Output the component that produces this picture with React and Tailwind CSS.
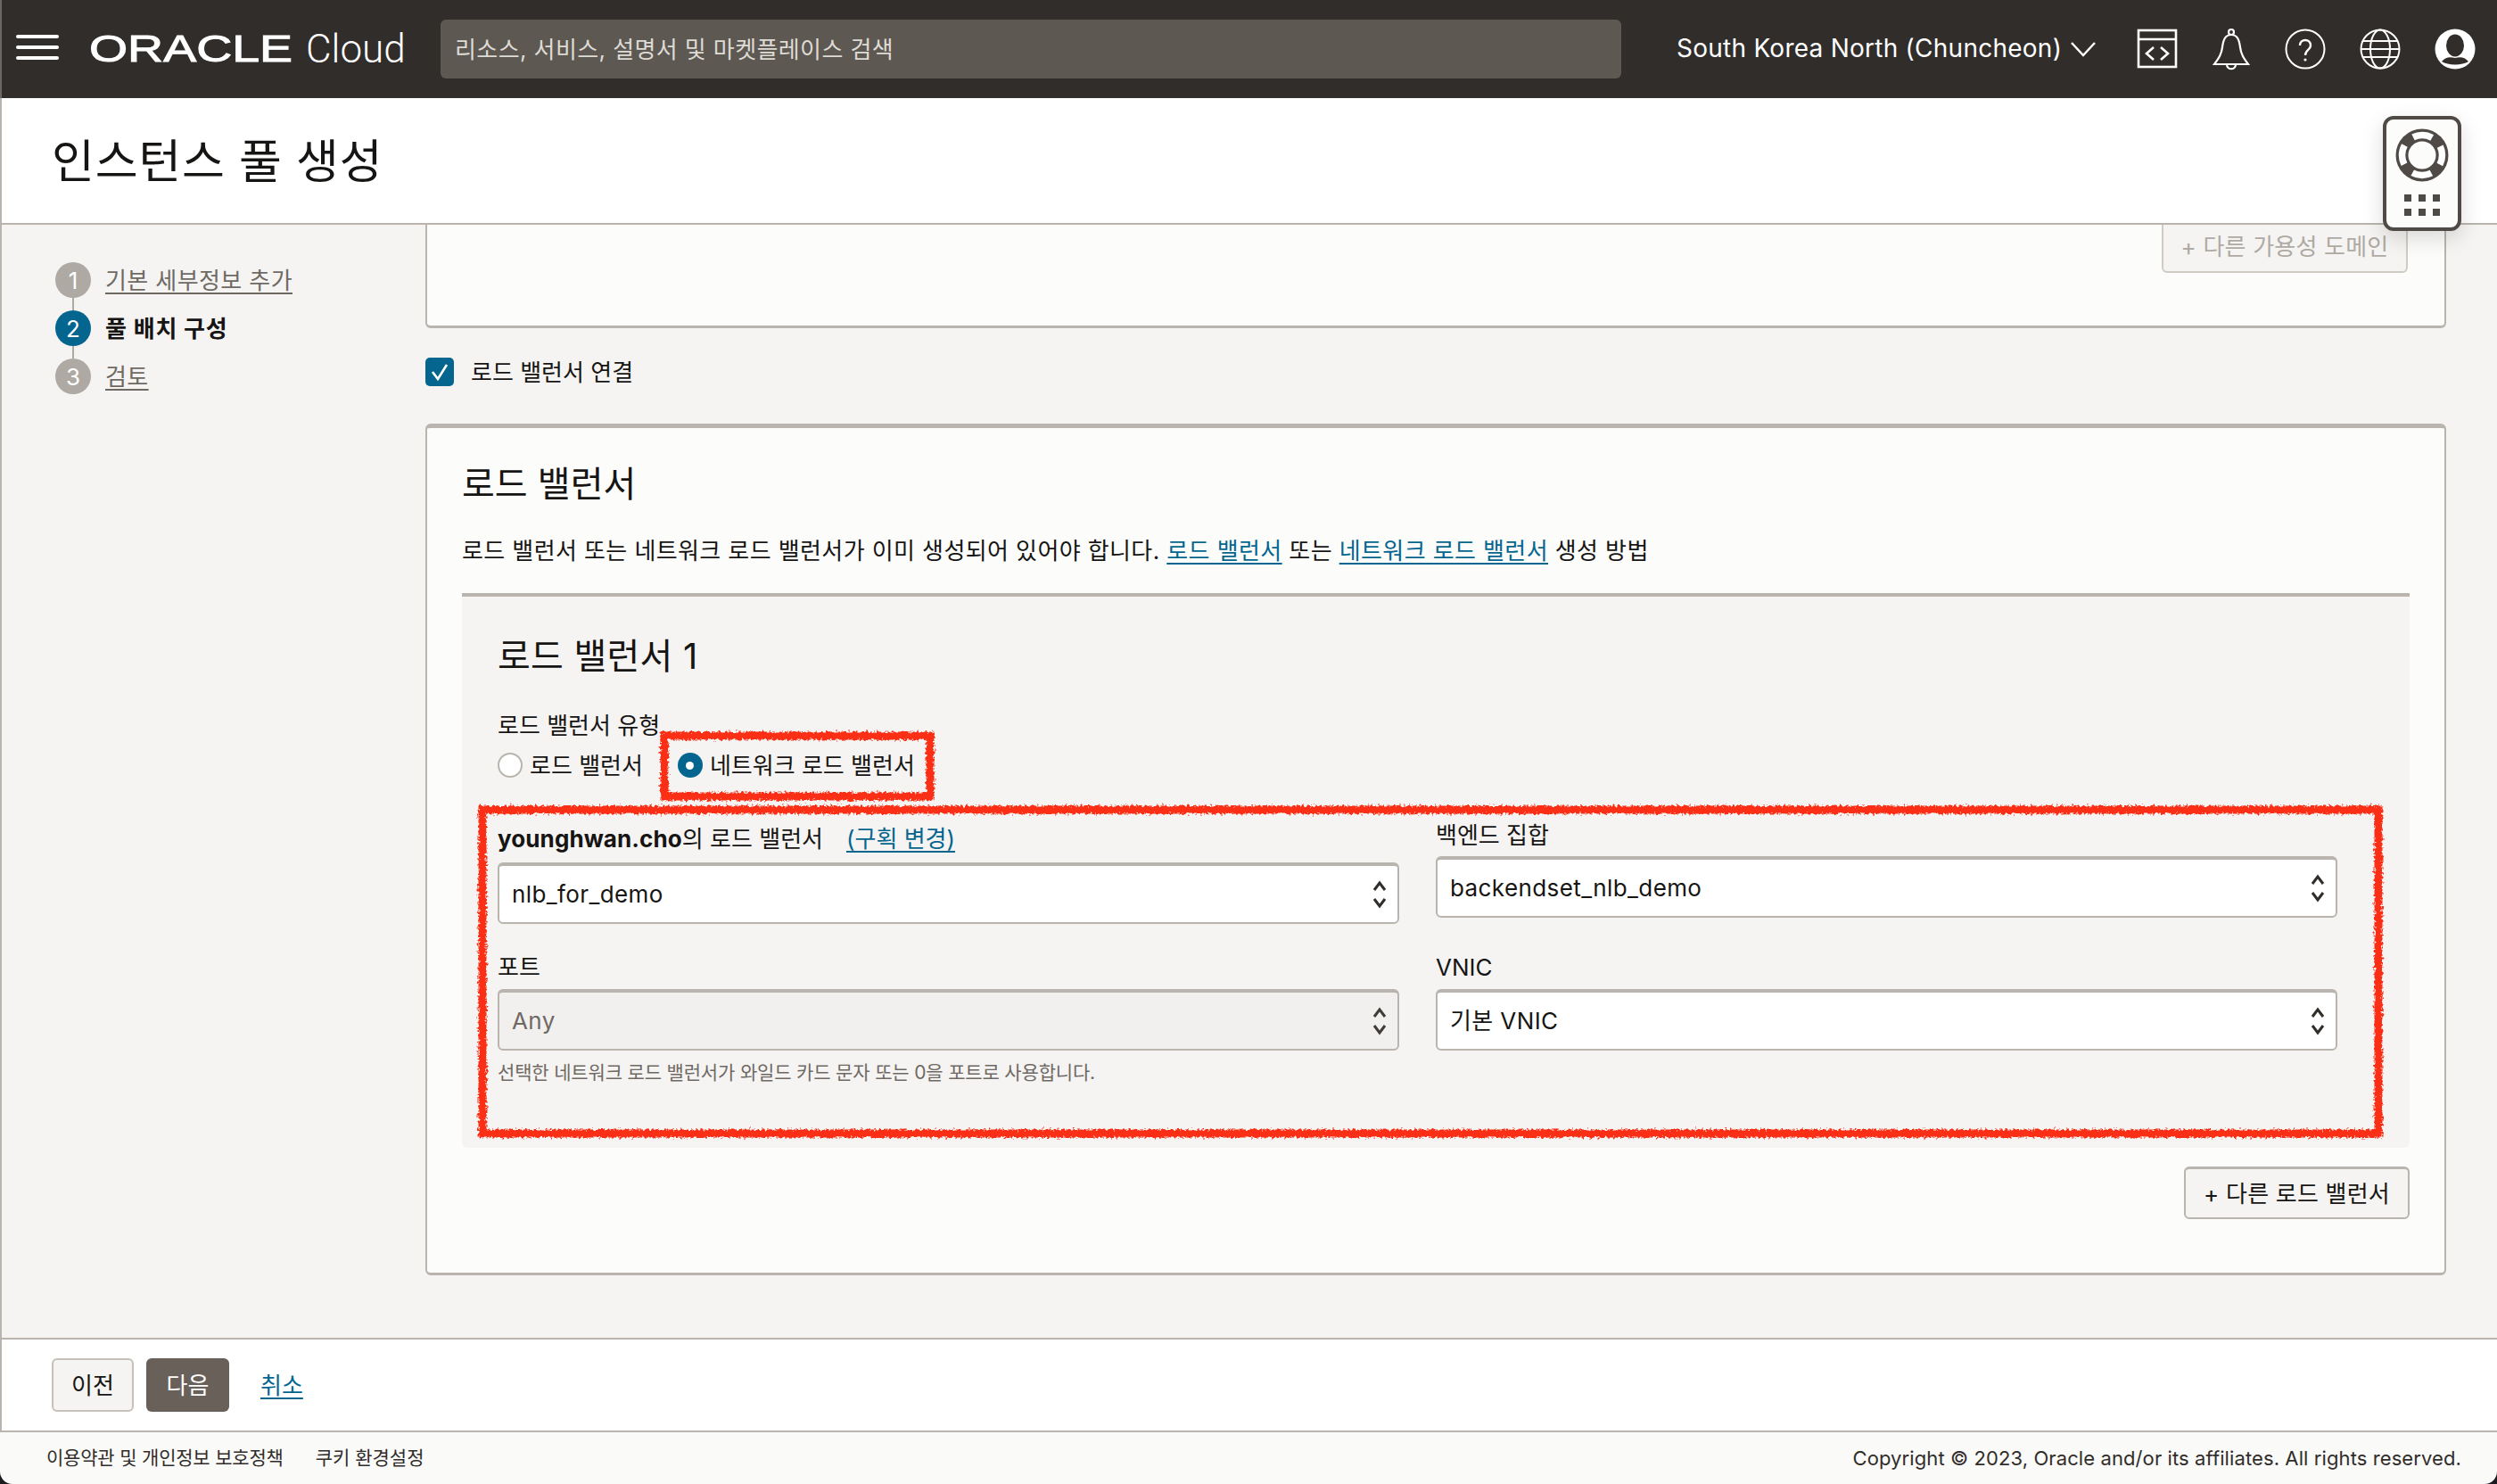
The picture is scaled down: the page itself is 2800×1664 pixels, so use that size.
const KR = { fontFamily: 'Inter, "Noto Sans CJK KR", sans-serif' };

function Chevrons({ dim }) {
  return (
    <svg width="16" height="32" viewBox="0 0 16 32" fill="none" stroke={dim ? '#3f3b37' : '#312d2a'} strokeWidth="3" className="shrink-0">
      <path d="M2 11 L8 3 L14 11" />
      <path d="M2 21 L8 29 L14 21" />
    </svg>
  );
}

function Select({ value, disabled }) {
  return (
    <div className={`h-[69px] w-full flex items-center justify-between rounded-[6px] border-2 border-t-4 border-[#b9b5ae] pl-[14px] pr-[12px] text-[26px] tracking-[0.4px] ${disabled ? 'bg-[#f1f0ee] text-[#6f6964]' : 'bg-white text-[#161513]'}`}>
      <span>{value}</span>
      <Chevrons dim={disabled} />
    </div>
  );
}

function Step({ n, label, active, last }) {
  return (
    <div className={`flex gap-[16px] ${last ? 'h-[40px]' : 'h-[54px]'}`}>
      <div className="flex flex-col items-center w-[40px]">
        <div className={`w-[40px] h-[40px] rounded-full flex items-center justify-center text-[26px] text-white ${active ? 'bg-[#04668f]' : 'bg-[#aeaaa3]'}`}>{n}</div>
        {!last && <div className="w-[2px] flex-1 bg-[#aeaaa3]" />}
      </div>
      <div className={`h-[40px] flex items-center text-[26px] ${active ? 'font-bold text-[#161513] tracking-[0.8px]' : 'text-[#6f6964] underline underline-offset-[4px] tracking-[0.4px]'}`}>{label}</div>
    </div>
  );
}

function TopIcons() {
  return (
    <div className="ml-auto mr-[24px] flex items-center gap-[38px]">
      <svg width="46" height="46" viewBox="0 0 46 46" fill="none" stroke="#fff" strokeWidth="2.6">
        <rect x="2" y="2" width="42" height="41" />
        <path d="M2 12 H44" />
        <path d="M19 21 L11 28 L19 35" />
        <path d="M27 21 L35 28 L27 35" />
      </svg>
      <svg width="44" height="48" viewBox="0 0 44 48" fill="none" stroke="#fff" strokeWidth="2.2">
        <path d="M3 41 H41 C36 34 33 30 32 22 C31 14 29 8 22 8 C15 8 13 14 12 22 C11 30 8 34 3 41 Z" />
        <circle cx="22" cy="5" r="3" />
        <path d="M17 41 C17 48 27 48 27 41" />
      </svg>
      <svg width="46" height="46" viewBox="0 0 46 46" fill="none" stroke="#fff" strokeWidth="2">
        <circle cx="23" cy="23" r="21.5" />
        <path d="M17 19 C17 11 29 11 29 19 C29 24 23 24 23 30" strokeWidth="2.4" />
        <circle cx="23" cy="35" r="1.6" fill="#fff" stroke="none" />
      </svg>
      <svg width="46" height="46" viewBox="0 0 46 46" fill="none" stroke="#fff" strokeWidth="2">
        <circle cx="23" cy="23" r="21.5" />
        <ellipse cx="23" cy="23" rx="11" ry="21.5" />
        <path d="M4 14 H42 M2 23 H44 M4 32 H42" />
      </svg>
      <svg width="46" height="46" viewBox="0 0 46 46">
        <circle cx="23" cy="23" r="22.5" fill="#fff" />
        <ellipse cx="23" cy="19" rx="10" ry="12.5" fill="#312d2a" />
        <path d="M8 37 C13 31 18 32 23 33 C28 32 33 31 38 37 C31 41.5 15 41.5 8 37 Z" fill="#312d2a" />
      </svg>
    </div>
  );
}

function HelpWidget() {
  return (
    <div className="absolute left-[2672px] top-[130px] w-[88px] h-[129px] bg-[#fcfcfb] border-[4px] border-[#4f4a46] rounded-[12px] shadow-[0_8px_24px_rgba(0,0,0,0.14)] flex flex-col items-center pt-[10px]">
      <svg width="60" height="60" viewBox="0 0 60 60">
        <circle cx="30" cy="30" r="29.5" fill="#4f4a46" />
        <circle cx="30" cy="30" r="22.5" fill="none" stroke="#fff" strokeWidth="7.5" strokeDasharray="22 13.34" strokeDashoffset="11" />
        <circle cx="30" cy="30" r="15.5" fill="#fcfcfb" />
      </svg>
      <div className="grid grid-cols-3 gap-[8px] mt-[14px]">
        {[0, 1, 2, 3, 4, 5].map((i) => (
          <div key={i} className="w-[8px] h-[8px] bg-[#4f4a46]" />
        ))}
      </div>
    </div>
  );
}

function RedMarks() {
  return (
    <svg className="absolute left-0 top-0 pointer-events-none" width="2800" height="1664" fill="none">
      <defs>
        <filter id="rough" x="-5%" y="-5%" width="110%" height="110%">
          <feTurbulence type="fractalNoise" baseFrequency="0.35" numOctaves="2" seed="4" />
          <feDisplacementMap in="SourceGraphic" scale="7" />
        </filter>
      </defs>
      <g filter="url(#rough)" stroke="#fb2f14" strokeWidth="9">
        <rect x="745" y="825" width="298" height="68" />
        <rect x="541" y="908" width="2126" height="363" />
      </g>
    </svg>
  );
}

export default function App() {
  return (
    <div className="relative w-[2800px] h-[1664px] overflow-hidden bg-[#1c1c20] flex flex-col" style={KR}>
      <header className="h-[110px] shrink-0 bg-[#312d2a] border-l-2 border-[#6b6864] flex items-center text-white">
        <div className="ml-[16px] mb-[4px] w-[48px] flex flex-col gap-[8px]">
          <div className="h-[4px] rounded-full bg-white" />
          <div className="h-[4px] rounded-full bg-white" />
          <div className="h-[4px] rounded-full bg-white" />
        </div>
        <div className="ml-[34px] w-[243px] text-[42px] leading-none origin-left scale-x-[1.32] whitespace-nowrap [-webkit-text-stroke:1px_white]" style={{ fontFamily: '"Liberation Sans", sans-serif' }}>ORACLE</div>
        <div className="w-[151px] text-[44px] leading-none font-light" style={{ fontFamily: 'Roboto, sans-serif' }}>Cloud</div>
        <div className="w-[1324px] h-[66px] bg-[#5d5852] rounded-[6px] flex items-center pl-[16px] text-[26px] text-[#dedbd5] tracking-[0.4px]">리소스, 서비스, 설명서 및 마켓플레이스 검색</div>
        <div className="ml-[62px] mb-[2px] text-[28px] whitespace-nowrap tracking-[0.25px]">South Korea North (Chuncheon)</div>
        <svg width="28" height="18" viewBox="0 0 28 18" fill="none" stroke="#fff" strokeWidth="2.5" className="ml-[10px]">
          <path d="M1 2 L14 16 L27 2" />
        </svg>
        <TopIcons />
      </header>

      <div className="h-[142px] shrink-0 bg-white border-l-2 border-b-2 border-[#b9b5ae] flex items-center pl-[56px] pt-[3px] text-[52px] text-[#161513] tracking-[0.8px]">인스턴스 풀 생성</div>

      <div className="flex-1 min-h-0 bg-[#f5f4f2] border-l-2 border-[#b9b5ae] flex">
        <nav className="w-[475px] shrink-0 pl-[60px] pt-[42px]">
          <Step n="1" label="기본 세부정보 추가" />
          <Step n="2" label="풀 배치 구성" active />
          <Step n="3" label="검토" last />
        </nav>
        <main className="w-[2266px] flex flex-col">
          <div className="h-[116px] shrink-0 bg-[#fcfcfb] border-x-2 border-b-[3px] border-[#b9b5ae] rounded-b-[6px] flex justify-end items-start pr-[41px]">
            <div className="w-[276px] h-[54px] pb-[3px] bg-[#f5f4f2] border-2 border-t-0 border-[#cfccc6] rounded-b-[6px] flex items-center justify-center text-[26px] text-[#aeaaa3] tracking-[0.2px]">+ 다른 가용성 도메인</div>
          </div>
          <div className="mt-[33px] h-[32px] flex items-center gap-[19px]">
            <div className="w-[32px] h-[32px] bg-[#04668f] rounded-[5px] flex items-center justify-center">
              <svg width="24" height="22" viewBox="0 0 24 22" fill="none" stroke="#fff" strokeWidth="2.6"><path d="M4 11 L10 19 L20 3" /></svg>
            </div>
            <span className="text-[26px] text-[#161513]">로드 밸런서 연결</span>
          </div>
          <section className="mt-[42px] h-[955px] bg-[#fcfcfb] border-x-2 border-b-[3px] border-t-[5px] border-[#b9b5ae] rounded-[6px] px-[39px] pt-[35px] flex flex-col">
            <h2 className="h-[50px] pt-[6px] flex items-center text-[40px] text-[#161513]">로드 밸런서</h2>
            <p className="mt-[33px] h-[36px] pt-[3px] flex items-center text-[26px] text-[#161513] whitespace-pre tracking-[0.4px]">
              로드 밸런서 또는 네트워크 로드 밸런서가 이미 생성되어 있어야 합니다. <a className="text-[#04668f] underline underline-offset-[4px]">로드 밸런서</a> 또는 <a className="text-[#04668f] underline underline-offset-[4px]">네트워크 로드 밸런서</a> 생성 방법
            </p>
            <div className="mt-[31px] h-[622px] bg-[#f5f4f2] border-t-[4px] border-[#b9b5ae] rounded-b-[6px] pl-[40px] pr-[81px] pt-[40px]">
              <h3 className="h-[50px] pt-[3px] flex items-center text-[40px] text-[#161513] tracking-[0.2px]">로드 밸런서 1</h3>
              <div className="mt-[37px] h-[34px] flex items-center text-[26px] text-[#161513]">로드 밸런서 유형</div>
              <div className="mt-[12px] h-[32px] flex items-center text-[26px] text-[#161513]">
                <div className="w-[28px] h-[28px] rounded-full bg-white border-2 border-[#b9b5ae]" />
                <span className="ml-[8px]">로드 밸런서</span>
                <div className="ml-[39px] w-[28px] h-[28px] rounded-full bg-[#04668f] flex items-center justify-center">
                  <div className="w-[9px] h-[9px] rounded-full bg-white" />
                </div>
                <span className="ml-[8px]">네트워크 로드 밸런서</span>
              </div>
              <div className="mt-[44px] grid grid-cols-2 gap-x-[41px] gap-y-[31px]">
                <div className="pt-[6px]">
                  <div className="h-[34px] mb-[9px] pb-[2px] flex items-center text-[26px] text-[#161513] whitespace-pre">
                    <b className="tracking-[0.1px]">younghwan.cho</b>의 로드 밸런서<a className="ml-[26px] text-[#04668f] underline underline-offset-[4px]">(구획 변경)</a>
                  </div>
                  <Select value="nlb_for_demo" />
                </div>
                <div>
                  <div className="h-[34px] mb-[8px] pt-[2px] flex items-center text-[26px] text-[#161513]">백엔드 집합</div>
                  <Select value="backendset_nlb_demo" />
                </div>
                <div>
                  <div className="h-[34px] mb-[8px] flex items-center text-[26px] text-[#161513]">포트</div>
                  <Select value="Any" disabled />
                  <div className="mt-[10px] h-[30px] flex items-center text-[21px] text-[#6f6964] tracking-[-0.17px]">선택한 네트워크 로드 밸런서가 와일드 카드 문자 또는 0을 포트로 사용합니다.</div>
                </div>
                <div>
                  <div className="h-[34px] mb-[8px] flex items-center text-[26px] text-[#161513]">VNIC</div>
                  <Select value="기본 VNIC" />
                </div>
              </div>
            </div>
            <div className="mt-[21px] self-end w-[253px] h-[59px] bg-[#f5f4f2] border-2 border-t-[3px] border-[#b9b5ae] rounded-[6px] flex items-center justify-center text-[26px] text-[#161513] tracking-[0.2px]">+ 다른 로드 밸런서</div>
          </section>
        </main>
      </div>

      <div className="h-[106px] shrink-0 bg-white border-l-2 border-y-2 border-[#b9b5ae] flex items-center pl-[56px]">
        <button className="w-[92px] h-[60px] bg-[#f5f4f2] border-2 border-[#c5c1ba] rounded-[6px] text-[26px] text-[#161513]">이전</button>
        <button className="ml-[14px] w-[93px] h-[60px] bg-[#696059] rounded-[6px] text-[26px] text-white">다음</button>
        <a className="ml-[35px] text-[26px] text-[#04668f] underline underline-offset-[4px]">취소</a>
      </div>

      <footer className="h-[58px] shrink-0 bg-[#fafaf8] rounded-b-[14px] flex items-center justify-between pl-[52px] pr-[40px] text-[21px] text-[#312d2a]">
        <div className="flex gap-[36px]">
          <span className="tracking-[-0.2px]">이용약관 및 개인정보 보호정책</span>
          <span>쿠키 환경설정</span>
        </div>
        <span className="text-[22px] tracking-[0.1px]">Copyright © 2023, Oracle and/or its affiliates. All rights reserved.</span>
      </footer>

      <HelpWidget />
      <RedMarks />
    </div>
  );
}
